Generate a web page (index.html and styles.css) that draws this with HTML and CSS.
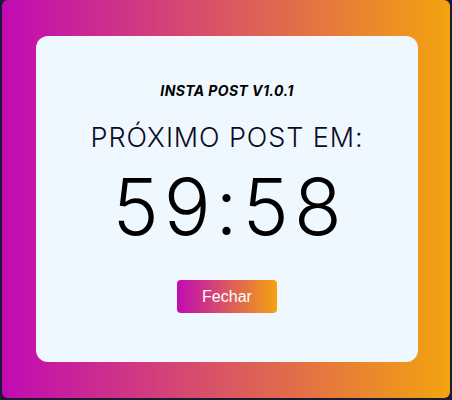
FILE: index.html
```html
<!DOCTYPE html>
<html lang="pt">
<head>
<meta charset="utf-8">
<link rel="stylesheet" href="styles.css">
</head>
<body>
<div class="frame">
  <div class="card">
    <div class="version">INSTA POST V1.0.1</div>
    <div class="label">PRÓXIMO POST EM:</div>
    <div class="timer">59:58</div>
    <button class="close">Fechar</button>
  </div>
</div>
</body>
</html>
```

FILE: styles.css
```css
html, body {
  margin: 0;
  padding: 0;
  background: #1b1a33;
  width: 452px;
  height: 400px;
  overflow: hidden;
}
.frame {
  box-sizing: border-box;
  margin-left: 2px;
  width: 448px;
  height: 398px;
  border-radius: 6px;
  background: linear-gradient(to right, #c10ab4, #f3a30f);
  padding: 36px 32px 36px 34px;
}
.card {
  box-sizing: border-box;
  width: 382px;
  height: 326px;
  background: #f0f8ff;
  border-radius: 12px;
  display: flex;
  flex-direction: column;
  align-items: center;
  font-family: Inter, "Noto Sans", sans-serif;
  color: #000;
  padding-top: 46px;
}
.version {
  font-size: 14px;
  font-weight: 700;
  font-style: italic;
  line-height: 17px;
  letter-spacing: 0.4px;
}
.label {
  margin-top: 22px;
  font-size: 27px;
  font-weight: 300;
  line-height: 33px;
  letter-spacing: 0.9px;
  color: #0b0b24;
}
.timer {
  margin-top: 6px;
  font-size: 78px;
  font-weight: 300;
  line-height: 94px;
  letter-spacing: 5px;
  text-indent: 5px;
}
.close {
  margin-top: 26px;
  width: 100px;
  height: 33px;
  border: none;
  border-radius: 4px;
  background: linear-gradient(to right, #c10ab4, #f3a30f);
  color: #fff;
  font-family: "Liberation Sans", Arial, sans-serif;
  font-size: 16px;
  padding: 0;
}
```
